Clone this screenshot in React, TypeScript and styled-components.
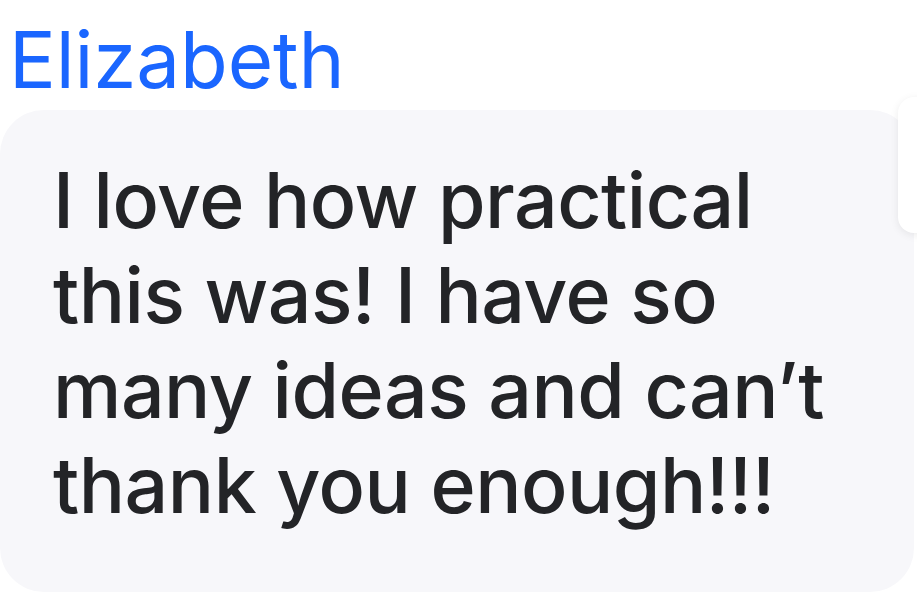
import React from "react";
import styled, { createGlobalStyle } from "styled-components";

const Global = createGlobalStyle`
  html, body { margin: 0; padding: 0; background: #ffffff; overflow: hidden; }
  body { font-family: Inter, "Noto Sans", sans-serif; }
`;

const Page = styled.div`
  position: relative;
  width: 917px;
  height: 594px;
  overflow: hidden;
  background: #ffffff;
`;

const Sender = styled.div`
  padding: 13px 0 0 9px;
  font-size: 78px;
  line-height: 94px;
  font-weight: 400;
  color: #1a66ff;
  letter-spacing: -0.1px;
`;

const Bubble = styled.div`
  margin-top: 3px;
  width: 914px;
  height: 482px;
  box-sizing: border-box;
  background: #f7f7fa;
  border-radius: 44px;
  padding: 43px 0 0 53px;
`;

const Message = styled.p`
  margin: 0;
  font-size: 77px;
  line-height: 95px;
  font-weight: 500;
  color: #232427;
  letter-spacing: -0.5px;
  max-width: 840px;
`;

const SideCard = styled.div`
  position: absolute;
  left: 898px;
  top: 97px;
  width: 80px;
  height: 136px;
  background: #ffffff;
  border-radius: 16px;
  box-shadow: 0 2px 8px rgba(0, 0, 0, 0.08);
`;

export default function App() {
  return (
    <Page>
      <Global />
      <Sender>Elizabeth</Sender>
      <Bubble>
        <Message>
          I love how practical
          <br />
          this was! I have so
          <br />
          many ideas and can’t
          <br />
          thank you enough!!!
        </Message>
      </Bubble>
      <SideCard />
    </Page>
  );
}
